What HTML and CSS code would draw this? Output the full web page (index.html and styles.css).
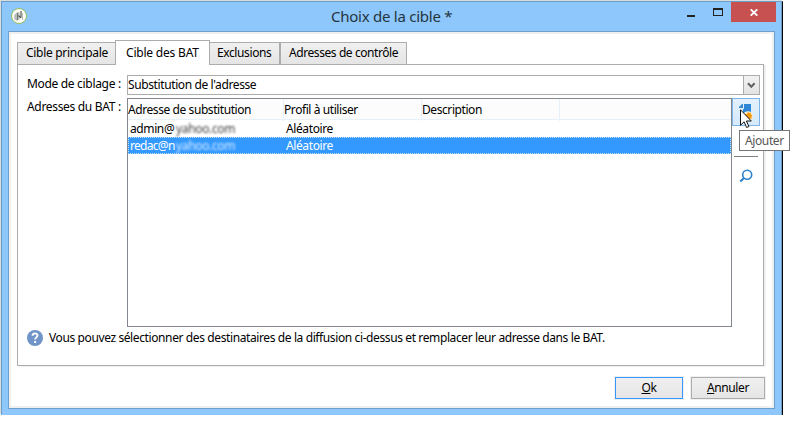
FILE: index.html
```html
<!DOCTYPE html>
<html lang="fr">
<head>
<meta charset="utf-8">
<title>Choix de la cible</title>
<link rel="stylesheet" href="styles.css">
</head>
<body>
<div class="window">
  <header class="titlebar">
    <svg class="app-icon" width="16" height="16" viewBox="0 0 16 16"><circle cx="8" cy="8" r="7.500" fill="#fafcf7" stroke="#98bd5c"/><path d="M3.200 7l3.300-3 2 .5v7l-3 1.200-2.300-1.700z" fill="#b9bcb8"/><path d="M6.500 5v7" stroke="#747a74"/><path d="M10 3v6.500M7.500 7.500l2.300 2.300" stroke="#4c504b" stroke-width="1.100" fill="none"/><path d="M11.500 5v7" stroke="#a5aaa3" stroke-width=".8"/></svg>
    <h1 class="title">Choix de la cible *</h1>
    <div class="controls">
      <span class="minimize"></span>
      <span class="maximize"></span>
      <span class="close"><svg width="8" height="7" viewBox="0 0 8 7"><path d="M.7.3L7.300 6.700M7.300.3L.7 6.700" stroke="#fff" stroke-width="1.800"/></svg></span>
    </div>
  </header>
  <main class="client">
    <nav class="tabs">
      <span class="tab t1">Cible principale</span>
      <span class="tab t2">Cible des BAT</span>
      <span class="tab t3">Exclusions</span>
      <span class="tab t4">Adresses de contrôle</span>
    </nav>
    <section class="panel">
      <div class="row mode">
        <label class="label">Mode de ciblage :</label>
        <div class="combo"><span>Substitution de l'adresse</span><span class="arrow"><svg width="9" height="7" viewBox="0 0 9 7"><path d="M1 1.300l3.300 3.400 3.300-3.400" fill="none" stroke="#606060" stroke-width="2"/></svg></span></div>
      </div>
      <div class="row">
        <label class="label">Adresses du BAT :</label>
        <div class="list">
          <div class="grid head"><span>Adresse de substitution</span><span>Profil à utiliser</span><span>Description</span></div>
          <div class="grid item"><span><span class="addr">admin@</span><span class="masked">yahoo.com</span></span><span>Aléatoire</span></div>
          <div class="grid item selected"><span><span class="addr">redac@n</span><span class="masked">yahoo.com</span></span><span>Aléatoire</span></div>
        </div>
        <div class="tools">
          <button class="add" aria-label="Ajouter"><svg width="28" height="28" viewBox="0 0 28 28"><path d="M7 10V9l3-3h1v4z" fill="#3a8ad2"/><path d="M12 6h7v10h-8v-5h1z" fill="#2e86d6"/><circle cx="16" cy="18" r="4.800" fill="#fff0d3"/><path d="M16 13.800l1 1.300 1.800-.5.100 1.900 1.600.8-1.200 1.400.7 1.700-2 .2-.7 1.600-1.600-1-1.700.7-.3-1.700-1.500-.9 1.100-1.500-.3-1.800 1.900.1z" fill="#f4980c"/></svg></button>
          <div class="separator"></div>
          <svg class="search" width="14" height="14" viewBox="0 0 14 14"><circle cx="8.200" cy="5.700" r="4.500" fill="none" stroke="#2d82cc" stroke-width="1.600"/><path d="M5 9L1.300 12.500" stroke="#2d82cc" stroke-width="2.100"/></svg>
          <svg class="cursor" width="12" height="20" viewBox="0 0 12 20"><path d="M.5.8v15.500l3.600-3.500 2.500 5.700 2.300-1-2.500-5.500h4.900z" fill="#fff" stroke="#111"/></svg>
          <div class="tooltip">Ajouter</div>
        </div>
      </div>
      <div class="help"><svg width="16" height="16" viewBox="0 0 16 16"><circle cx="8" cy="8" r="8" fill="#7094c7"/><path d="M5.500 5.800C5.600 2.500 10.600 2.600 10.500 5.600c0 1.800-2.400 1.800-2.400 4" fill="none" stroke="#fff" stroke-width="1.900"/><path d="M7.100 11h2v2h-2z" fill="#fff"/></svg><span>Vous pouvez sélectionner des destinataires de la diffusion ci-dessus et remplacer leur adresse dans le BAT.</span></div>
    </section>
    <footer class="actions">
      <button class="btn ok"><u>O</u>k</button>
      <button class="btn cancel"><u>A</u>nnuler</button>
    </footer>
  </main>
</div>
</body>
</html>
```
FILE: styles.css
```css
* { box-sizing: border-box; }
html, body { margin: 0; }
body {
  width: 796px; height: 432px; overflow: hidden;
  background: #fff; color: #000;
  font: 12px/16px "Noto Sans", "Open Sans", sans-serif;
  letter-spacing: -0.39px;
  white-space: nowrap;
}
button { font: inherit; letter-spacing: inherit; color: inherit; padding: 0; margin: 0; }
.window {
  width: 782px; height: 414px; margin: 1px 0 0 1px;
  background: #8dc7fb;
  border: 1px solid #6b9dc8; border-bottom: 0; border-right-color: #000;
  box-shadow: -1px -1px 0 #d9dcde, inset -1px 0 0 #6b9dc8;
}
.titlebar { height: 29px; display: flex; }
.app-icon { margin: 6px 0 0 9px; }
.title {
  margin: 4px 0 0 304px; flex: 1;
  font: 15px/21px "Noto Sans", "Open Sans", sans-serif;
  letter-spacing: -0.25px; color: #253540;
}
.controls { display: flex; }
.minimize { width: 8px; height: 2px; margin: 13px 18px 0 0; background: #222; }
.maximize { width: 10px; height: 8px; margin: 6px 8px 0 0; border: 1px solid #222; border-top-width: 2px; }
.close { width: 45px; height: 20px; margin-right: 6px; background: #c75050; display: flex; align-items: center; justify-content: center; }
.client {
  width: 767px; height: 378px; margin-left: 6px;
  border: 1px solid #6f9fcd; background: #fff;
  box-shadow: inset 0 0 0 2px #f0f0f0;
  padding: 8px 9px 0 8px;
}
.tabs { display: flex; align-items: flex-end; height: 24px; }
.tab {
  height: 22px; border: 1px solid #acacac; border-bottom: 0;
  background: linear-gradient(#f0f0f0, #e5e5e5);
  padding: 2px 0 0 8px;
}
.t1 { width: 98px; border-right: 0; letter-spacing: -0.3px; }
.t2 { width: 95px; height: 25px; background: #fff; padding: 4px 0 0 10px; margin-bottom: -1px; z-index: 1; letter-spacing: -0.2px; }
.t3 { width: 70px; border-left: 0; padding-left: 7px; }
.t4 { width: 127px; letter-spacing: -0.42px; }
.panel {
  width: 747px; height: 302px;
  border: 1px solid #acacac; box-shadow: 2px 1px 0 #f0f0f0;
  padding-top: 10px;
}
.row { display: flex; }
.mode { margin-bottom: 3px; }
.label { width: 109px; padding: 1px 0 0 9px; letter-spacing: -0.32px; }
.combo {
  width: 633px; height: 20px; border: 1px solid #acacac;
  display: flex; justify-content: space-between; padding-top: 1px;
}
.arrow {
  width: 16px; height: 18px; margin-top: -1px; border-left: 1px solid #acacac;
  background: linear-gradient(#f2f2f2, #e3e3e3);
  display: flex; align-items: center; justify-content: center;
}
.list { width: 605px; height: 229px; border: 1px solid #828790; }
.grid { display: grid; grid-template-columns: 156px 138px 138px 1fr; }
.head { height: 21px; line-height: 22px; background: #fcfcfc; border-bottom: 1px solid #e8f1fa; letter-spacing: -0.42px; }
.head span { border-right: 1px solid #e8f1fa; }
.item { height: 17px; line-height: 18px; }
.item > span { padding-left: 2px; }
.item > span:first-child { display: flex; }
.addr { width: 46px; }
.masked { filter: blur(1.2px); color: #444; letter-spacing: -0.35px; }
.selected { background: #3399ff; color: #fff; outline: 1px dotted #c5e2ff; outline-offset: -1px; }
.selected .addr { letter-spacing: -0.7px; }
.selected .masked { color: #d4eaff; }
.tools { width: 28px; position: relative; display: flex; flex-direction: column; }
.add { width: 28px; height: 28px; border: 1px solid #7eb4ea; background: linear-gradient(#e3f0fc, #d5eafd); }
.add svg { display: block; margin: -1px; }
.separator { width: 24px; height: 1px; margin: 30px 0 12px 2px; background: #808080; }
.search { margin-left: 7px; }
.cursor { position: absolute; left: 8px; top: 11px; z-index: 3; }
.tooltip {
  position: absolute; left: 7px; top: 32px; width: 51px; height: 21px; z-index: 2;
  border: 1px solid #767676; background: #fff; color: #575757; padding: 2px 0 0 5px;
}
.help { display: flex; align-items: center; height: 16px; margin: 3px 0 0 9px; gap: 6px; }
.actions { display: flex; justify-content: flex-end; gap: 8px; padding-top: 11px; }
.btn {
  height: 22px; background: linear-gradient(#f0f0f0, #e5e5e5);
  border: 1px solid #acacac; box-shadow: 0 0 0 1px #f0f0f0;
}
.ok { width: 68px; border-color: #3399ff; }
.cancel { width: 74px; }
```
